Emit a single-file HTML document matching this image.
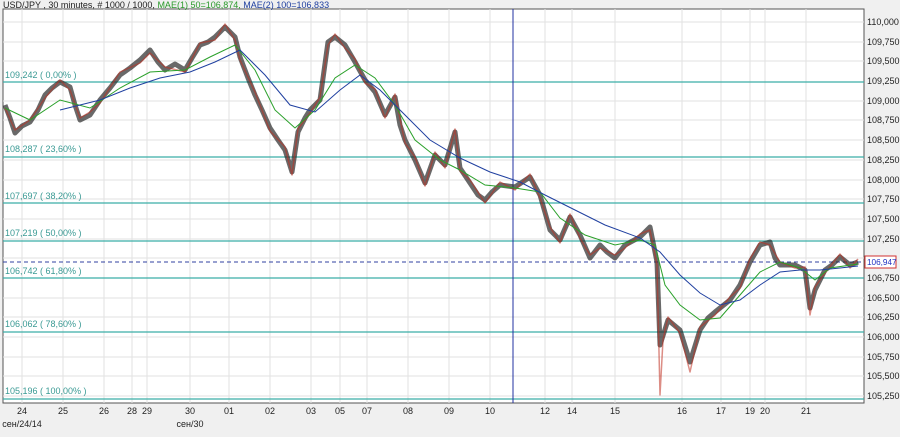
<!DOCTYPE html>
<html><head><meta charset="utf-8"><style>
body{margin:0;background:#f0f0f0;width:900px;height:432px;overflow:hidden;font-family:"Liberation Sans",Arial,sans-serif}
svg text{font-family:"Liberation Sans",Arial,sans-serif;font-size:9px}
</style></head><body>
<svg width="900" height="432" xmlns="http://www.w3.org/2000/svg">
<rect x="0" y="0" width="900" height="432" fill="#f0f0f0"/>
<rect x="3" y="9" width="861" height="394" fill="#fff" stroke="#555" stroke-width="1"/>
<g stroke="#e2e2e2" stroke-width="1">
<line x1="22" y1="9" x2="22" y2="403"/><line x1="63" y1="9" x2="63" y2="403"/><line x1="104" y1="9" x2="104" y2="403"/><line x1="132" y1="9" x2="132" y2="403"/><line x1="147" y1="9" x2="147" y2="403"/><line x1="190" y1="9" x2="190" y2="403"/><line x1="229" y1="9" x2="229" y2="403"/><line x1="270" y1="9" x2="270" y2="403"/><line x1="311" y1="9" x2="311" y2="403"/><line x1="340" y1="9" x2="340" y2="403"/><line x1="367" y1="9" x2="367" y2="403"/><line x1="408" y1="9" x2="408" y2="403"/><line x1="449" y1="9" x2="449" y2="403"/><line x1="490" y1="9" x2="490" y2="403"/><line x1="545" y1="9" x2="545" y2="403"/><line x1="572" y1="9" x2="572" y2="403"/><line x1="615" y1="9" x2="615" y2="403"/><line x1="682" y1="9" x2="682" y2="403"/><line x1="721" y1="9" x2="721" y2="403"/><line x1="750" y1="9" x2="750" y2="403"/><line x1="765" y1="9" x2="765" y2="403"/><line x1="806" y1="9" x2="806" y2="403"/>
<line x1="3" y1="22" x2="864" y2="22"/><line x1="3" y1="42" x2="864" y2="42"/><line x1="3" y1="61" x2="864" y2="61"/><line x1="3" y1="101" x2="864" y2="101"/><line x1="3" y1="120" x2="864" y2="120"/><line x1="3" y1="140" x2="864" y2="140"/><line x1="3" y1="160" x2="864" y2="160"/><line x1="3" y1="180" x2="864" y2="180"/><line x1="3" y1="199" x2="864" y2="199"/><line x1="3" y1="219" x2="864" y2="219"/><line x1="3" y1="239" x2="864" y2="239"/><line x1="3" y1="258" x2="864" y2="258"/><line x1="3" y1="298" x2="864" y2="298"/><line x1="3" y1="317" x2="864" y2="317"/><line x1="3" y1="337" x2="864" y2="337"/><line x1="3" y1="357" x2="864" y2="357"/><line x1="3" y1="376" x2="864" y2="376"/><line x1="3" y1="396" x2="864" y2="396"/>
</g>
<g stroke="#3aaea6" stroke-width="1.3">
<line x1="3" y1="82" x2="864" y2="82"/><line x1="3" y1="157" x2="864" y2="157"/><line x1="3" y1="203" x2="864" y2="203"/><line x1="3" y1="241" x2="864" y2="241"/><line x1="3" y1="278" x2="864" y2="278"/><line x1="3" y1="332" x2="864" y2="332"/><line x1="3" y1="399" x2="864" y2="399"/>
</g>
<g fill="#3a9a94">
<text x="5" y="78">109,242 ( 0,00% )</text><text x="5" y="152">108,287 ( 23,60% )</text><text x="5" y="199">107,697 ( 38,20% )</text><text x="5" y="236">107,219 ( 50,00% )</text><text x="5" y="274">106,742 ( 61,80% )</text><text x="5" y="327">106,062 ( 78,60% )</text><text x="5" y="394">105,196 ( 100,00% )</text>
</g>
<line x1="513" y1="9" x2="513" y2="403" stroke="#2030a0" stroke-width="1"/>
<line x1="3" y1="262" x2="864" y2="262" stroke="#3040a0" stroke-dasharray="4,3" stroke-width="1"/>
<polyline fill="none" stroke="#2a2a2a" stroke-opacity="0.7" stroke-width="5" stroke-linejoin="round" points="5,105 10,118 15,133 22,126 30,122 38,110 45,95 52,88 60,82 70,87 75,105 80,120 90,115 100,100 110,88 120,75 130,68 140,60 150,50 158,62 165,70 175,64 185,70 192,58 200,45 208,42 215,37 225,27 235,37 240,57 248,78 255,95 262,110 270,128 278,140 285,150 292,172 298,132 305,118 310,110 320,100 328,42 335,37 345,45 355,62 365,80 375,92 385,115 395,97 400,125 405,140 415,160 425,183 435,155 445,165 455,132 460,168 470,183 478,195 485,200 492,192 500,185 515,187 530,177 540,195 550,230 560,240 570,217 580,235 590,258 600,245 607,252 615,258 625,245 640,237 650,227 657,262 660,345 668,320 680,330 690,362 700,330 708,318 715,312 730,300 740,285 750,262 760,245 770,242 775,258 780,265 795,265 805,270 810,308 815,290 825,270 832,265 840,257 850,265 858,262"/>
<polyline fill="none" stroke="#c03020" stroke-opacity="0.55" stroke-width="1.5" stroke-linejoin="round" points="5,108 15,130 30,120 45,98 60,80 70,90 80,118 90,112 100,103 120,72 140,63 150,53 165,67 185,72 200,43 215,40 225,24 235,40 240,60 255,92 270,131 285,147 292,175 298,129 310,113 320,97 328,45 335,34 345,48 355,59 365,83 375,89 385,118 395,94 405,143 415,157 425,186 435,152 445,168 455,129 460,171 470,180 485,203 500,182 515,190 530,174 540,198 550,227 560,243 570,214 580,238 590,255 600,248 615,255 625,248 640,234 650,230 657,265 660,395 663,340 668,317 680,333 690,372 700,327 715,315 730,297 740,288 750,259 760,242 770,245 780,262 795,268 805,267 810,315 815,287 825,273 840,254 850,268 858,259"/>
<polyline fill="none" stroke="#2aa02a" stroke-width="1" points="5,108 30,120 60,100 90,108 120,88 150,72 185,70 210,57 235,45 255,70 275,110 295,128 315,110 335,78 355,65 375,78 395,105 415,140 440,160 460,170 485,185 515,188 540,192 560,218 585,235 615,245 640,240 655,245 665,285 680,305 700,320 720,318 740,295 760,272 780,262 800,268 815,280 830,268 858,264"/>
<polyline fill="none" stroke="#2040a0" stroke-width="1" points="60,110 100,100 130,88 160,78 190,72 215,62 240,50 265,75 290,105 315,112 340,90 360,75 380,90 405,115 430,140 460,158 490,172 520,182 545,195 575,210 605,225 640,238 660,252 680,275 700,293 720,305 740,300 760,285 780,272 800,270 820,270 840,268 858,266"/>
<g fill="#222" style="font-size:8.2px">
<text x="867" y="25">110,000</text><text x="867" y="45">109,750</text><text x="867" y="64">109,500</text><text x="867" y="84">109,250</text><text x="867" y="104">109,000</text><text x="867" y="123">108,750</text><text x="867" y="143">108,500</text><text x="867" y="163">108,250</text><text x="867" y="183">108,000</text><text x="867" y="202">107,750</text><text x="867" y="222">107,500</text><text x="867" y="242">107,250</text><text x="867" y="281">106,750</text><text x="867" y="301">106,500</text><text x="867" y="320">106,250</text><text x="867" y="340">106,000</text><text x="867" y="360">105,750</text><text x="867" y="379">105,500</text><text x="867" y="399">105,250</text>
</g>
<rect x="865" y="256" width="31" height="12" fill="#fff" stroke="#d03030"/>
<text x="867" y="265" fill="#2030c0" style="font-size:8.2px">106,947</text>
<g fill="#222" text-anchor="middle">
<text x="22" y="414">24</text><text x="63" y="414">25</text><text x="104" y="414">26</text><text x="132" y="414">28</text><text x="147" y="414">29</text><text x="190" y="414">30</text><text x="229" y="414">01</text><text x="270" y="414">02</text><text x="311" y="414">03</text><text x="340" y="414">05</text><text x="367" y="414">07</text><text x="408" y="414">08</text><text x="449" y="414">09</text><text x="490" y="414">10</text><text x="545" y="414">12</text><text x="572" y="414">14</text><text x="615" y="414">15</text><text x="682" y="414">16</text><text x="721" y="414">17</text><text x="750" y="414">19</text><text x="765" y="414">20</text><text x="806" y="414">21</text>
<text x="22" y="427">сен/24/14</text><text x="190" y="427">сен/30</text>
</g>
<text x="3" y="8" fill="#222">USD/JPY , 30 minutes, # 1000 / 1000, <tspan fill="#2a9a2a">MAE(1) 50=106,874,</tspan> <tspan fill="#2040a0">MAE(2) 100=106,833</tspan></text>
</svg>
</body></html>
